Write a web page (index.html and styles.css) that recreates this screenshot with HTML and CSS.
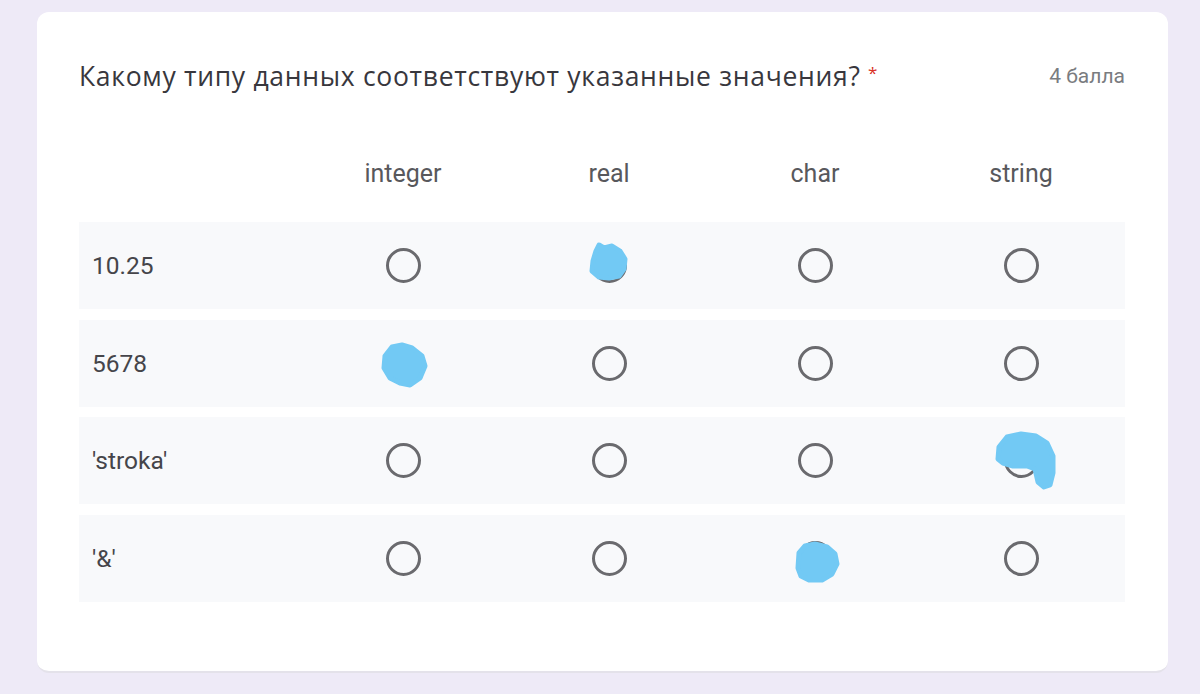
FILE: index.html
```html
<!DOCTYPE html>
<html lang="ru">
<head>
<meta charset="utf-8">
<title>Форма</title>
<link rel="stylesheet" href="styles.css">
</head>
<body>
<div class="card">
  <div class="head">
    <div class="title">Какому типу данных соответствуют указанные значения? <span class="req">*</span></div>
    <div class="points">4 балла</div>
  </div>
  <div class="grid">
    <div class="hrow">
      <div class="hcell"></div>
      <div class="hcell">integer</div>
      <div class="hcell">real</div>
      <div class="hcell">char</div>
      <div class="hcell">string</div>
    </div>
    <div class="row">
      <div class="label">10.25</div>
      <div class="cell"><span class="radio"></span></div>
      <div class="cell"><span class="radio"></span>
        <svg class="blob" viewBox="0 0 80 80"><path d="M24 35 L27 25 L30 19 L35 22 L43 20 L51 25 L56 33 L55 43 L50 50 L40 52 L30 51 L23 45 Z"/></svg>
      </div>
      <div class="cell"><span class="radio"></span></div>
      <div class="cell"><span class="radio"></span></div>
    </div>
    <div class="row">
      <div class="label">5678</div>
      <div class="cell"><span class="radio"></span>
        <svg class="blob" viewBox="0 0 80 80"><path d="M21 45 L22 33 L29 24 L39 22 L49 25 L59 33 L62 43 L57 55 L47 62 L37 60 L27 55 Z"/></svg>
      </div>
      <div class="cell"><span class="radio"></span></div>
      <div class="cell"><span class="radio"></span></div>
      <div class="cell"><span class="radio"></span></div>
    </div>
    <div class="row">
      <div class="label">'stroka'</div>
      <div class="cell"><span class="radio"></span></div>
      <div class="cell"><span class="radio"></span></div>
      <div class="cell"><span class="radio"></span></div>
      <div class="cell"><span class="radio"></span>
        <svg class="blob" viewBox="0 0 80 80"><path d="M17 38 L18 26 L26 16 L40 13 L55 15 L66 22 L72 35 L72 52 L69 64 L63 66 L57 61 L54 48 L46 45 L32 45 L22 42 Z"/></svg>
      </div>
    </div>
    <div class="row">
      <div class="label">'&amp;'</div>
      <div class="cell"><span class="radio"></span></div>
      <div class="cell"><span class="radio"></span></div>
      <div class="cell"><span class="radio"></span>
        <svg class="blob" viewBox="0 0 80 80"><path d="M23 50 L24 35 L30 28 L40 26 L52 29 L60 36 L62 46 L57 56 L47 62 L34 62 L26 58 Z"/></svg>
      </div>
      <div class="cell"><span class="radio"></span></div>
    </div>
  </div>
</div>
</body>
</html>
```

FILE: styles.css
```css
html, body {
  margin: 0;
  padding: 0;
}
body {
  background: #eeeaf7;
  width: 1200px;
  height: 694px;
  overflow: hidden;
  font-family: Roboto, "Noto Sans", "Liberation Sans", sans-serif;
  padding-top: 12px;
  box-sizing: border-box;
}
.card {
  margin-left: 37px;
  width: 1131px;
  height: 661px;
  box-sizing: border-box;
  background: #ffffff;
  border-radius: 12px;
  border-bottom: 2px solid #e4e2ea;
  padding: 48px 43px 0 42px;
}
.head {
  display: flex;
  justify-content: space-between;
  align-items: center;
  height: 32px;
}
.title {
  font-family: "Open Sans", Roboto, sans-serif;
  font-size: 26.5px;
  color: #38373d;
  letter-spacing: 0.7px;
}
.req {
  color: #d93025;
  font-size: 17px;
  vertical-align: 7px;
}
.points {
  font-size: 21px;
  color: #7a7c80;
}
.grid {
  margin-top: 56px;
}
.hrow {
  display: grid;
  grid-template-columns: 221px repeat(4, 206px);
  height: 50px;
  align-items: center;
  margin-bottom: 24px;
}
.hcell {
  text-align: center;
  font-size: 25px;
  color: #58585c;
}
.row {
  display: grid;
  grid-template-columns: 221px repeat(4, 206px);
  height: 87px;
  align-items: center;
  background: #f8f9fb;
  margin-bottom: 10.67px;
}
.label {
  padding-left: 13px;
  font-size: 24.5px;
  color: #45454a;
}
.cell {
  position: relative;
  display: flex;
  justify-content: center;
  align-items: center;
  height: 100%;
}
.radio {
  display: block;
  width: 35px;
  height: 35px;
  box-sizing: border-box;
  border: 3px solid #6a6a6e;
  border-radius: 50%;
}
.blob {
  position: absolute;
  left: calc(50% - 40px);
  top: calc(50% - 40px);
  width: 80px;
  height: 80px;
}
.blob path {
  fill: #72c9f4;
  stroke: #72c9f4;
  stroke-width: 5;
  stroke-linejoin: round;
}
```
